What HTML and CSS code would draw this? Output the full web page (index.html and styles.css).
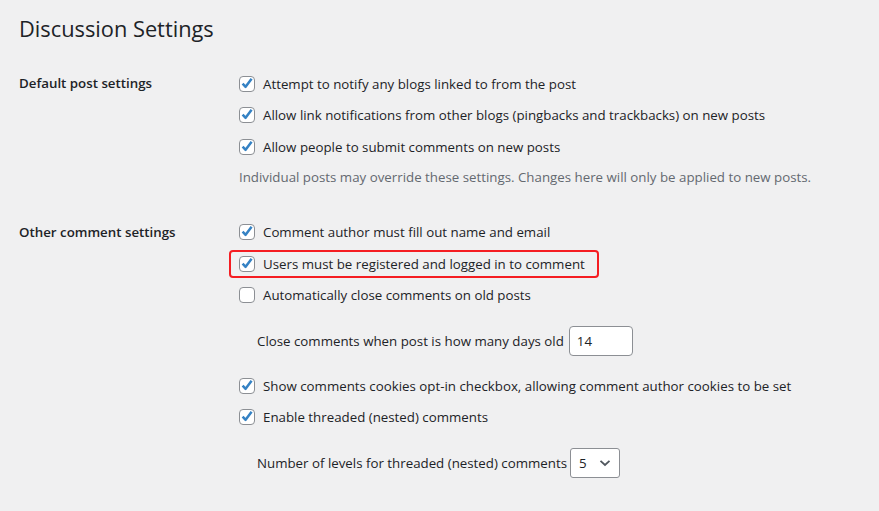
FILE: index.html
```html
<!DOCTYPE html>
<html>
<head>
  <meta charset="UTF-8">
  <title>Discussion Settings</title>
  <link rel="stylesheet" href="styles.css">
</head>
<body>
  <div class="wrap">
    <h1 class="title">Discussion Settings</h1>

    <div class="form-table">
      <div class="row-label">Default post settings</div>
      <div class="row-body">
        <div class="check-row"><span class="box checked"></span>Attempt to notify any blogs linked to from the post</div>
        <div class="check-row"><span class="box checked"></span>Allow link notifications from other blogs (pingbacks and trackbacks) on new posts</div>
        <div class="check-row"><span class="box checked"></span>Allow people to submit comments on new posts</div>
        <p class="description">Individual posts may override these settings. Changes here will only be applied to new posts.</p>
      </div>

      <div class="row-label">Other comment settings</div>
      <div class="row-body">
        <div class="check-row"><span class="box checked"></span>Comment author must fill out name and email</div>
        <div class="check-row">
          <div class="highlight"><span class="box checked"></span>Users must be registered and logged in to comment</div>
        </div>
        <div class="check-row"><span class="box"></span>Automatically close comments on old posts</div>
        <div class="sub-row">Close comments when post is how many days old <span class="num-input">14</span></div>
        <div class="check-row"><span class="box checked"></span>Show comments cookies opt-in checkbox, allowing comment author cookies to be set</div>
        <div class="check-row"><span class="box checked"></span>Enable threaded (nested) comments</div>
        <div class="sub-row">Number of levels for threaded (nested) comments
          <span class="select">5
            <svg width="12" height="8" viewBox="0 0 12 8"><path d="M1.5 1.8 L6 6 L10.5 1.8" fill="none" stroke="#50575e" stroke-width="1.8"/></svg>
          </span>
        </div>
      </div>
    </div>
  </div>
</body>
</html>
```

FILE: styles.css
```css
body {
  margin: 0;
  background: #f0f0f1;
  color: #1d2327;
  font-family: "Open Sans", "Noto Sans", sans-serif;
  font-size: 13.3px;
}
.wrap {
  padding: 0 0 0 19px;
}
.title {
  margin: 0;
  padding: 13px 0 0;
  height: 55px;
  box-sizing: border-box;
  font-size: 21.8px;
  font-weight: 400;
  line-height: 32px;
}
.form-table {
  display: grid;
  grid-template-columns: 220px 1fr;
  padding-top: 13px;
}
.row-label {
  font-weight: 600;
  line-height: 31.5px;
}
.row-body {
  padding-bottom: 25px;
}
.check-row {
  height: 31.5px;
  display: flex;
  align-items: center;
}
.box {
  width: 16px;
  height: 16px;
  box-sizing: border-box;
  border: 1px solid #8c8f94;
  border-radius: 4px;
  background: #fff;
  margin-right: 8px;
  flex: none;
}
.box.checked {
  background: #fff url("data:image/svg+xml,%3Csvg xmlns='http://www.w3.org/2000/svg' viewBox='0 0 16 16'%3E%3Cpath d='M3.6 7.6 L6.6 10.8 L12.6 2.8' fill='none' stroke='%233582c4' stroke-width='2.5' stroke-linejoin='round'/%3E%3C/svg%3E") center/16px no-repeat;
}
.highlight {
  display: flex;
  align-items: center;
  height: 28px;
  box-sizing: border-box;
  margin-left: -10px;
  padding: 0 12px 0 8px;
  border: 2px solid #f51d22;
  border-radius: 4px;
}
.description {
  margin: 0;
  height: 29px;
  line-height: 29px;
  color: #646970;
}
.sub-row {
  display: flex;
  align-items: center;
  height: 59px;
  padding-left: 18px;
}
.num-input {
  display: inline-block;
  width: 64px;
  height: 30px;
  box-sizing: border-box;
  margin-left: 5px;
  padding: 0 7px;
  line-height: 28px;
  border: 1px solid #8c8f94;
  border-radius: 4px;
  background: #fff;
}
.select {
  display: inline-flex;
  align-items: center;
  justify-content: space-between;
  width: 50px;
  height: 30px;
  box-sizing: border-box;
  margin-left: 3px;
  padding: 0 8px 0 8px;
  border: 1px solid #8c8f94;
  border-radius: 3px;
  background: #fff;
}
```
